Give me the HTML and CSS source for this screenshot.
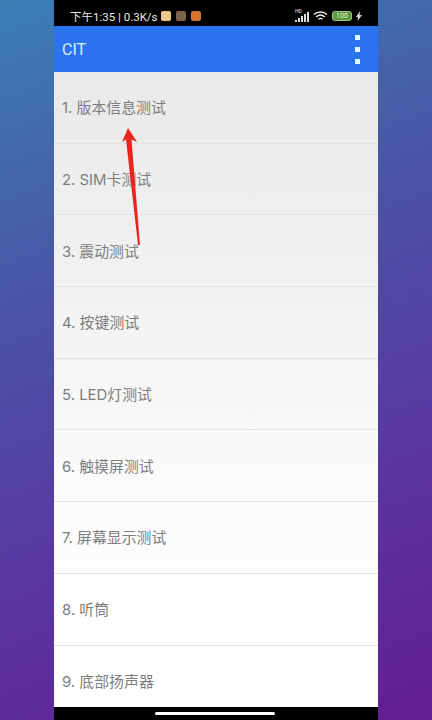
FILE: index.html
```html
<!DOCTYPE html>
<html lang="zh">
<head>
<meta charset="utf-8">
<title>CIT</title>
<link rel="stylesheet" href="styles.css">
</head>
<body>
<div class="phone">
  <div class="status">
    <div class="status-left">
      <span>下午1:35 | 0.3K/s</span>
      <i class="app a1"></i><i class="app a2"></i><i class="app a3"></i>
    </div>
    <div class="status-right">
      <span class="sig-wrap"><small class="hd">HD</small><svg width="15" height="10" viewBox="0 0 15 10"><path fill="#ddd" d="M0 8h2v2H0zM3 6h2v4H3zM6 4h2v6H6zM9 2h2v8H9zM12 0h2v10h-2z"/></svg></span>
      <svg class="wifi" width="15" height="12" viewBox="0 0 16 12" fill="none" stroke="#eee" stroke-width="1.500"><path d="M1 4.500c4-3.600 10-3.600 14 0M3.400 7c2.700-2.300 6.500-2.300 9.200 0M5.800 9.400c1.300-1 3.100-1 4.400 0"/></svg>
      <span class="batt">100</span>
      <svg width="6" height="10" viewBox="0 0 6 10"><path fill="#ddd" d="M4 0 0 6h2L1.500 10 6 4H3.500z"/></svg>
    </div>
  </div>
  <header class="bar">
    <span class="title">CIT</span>
    <div class="dots"><i></i><i></i><i></i></div>
  </header>
  <ul class="list">
    <li>1. 版本信息测试</li>
    <li>2. SIM卡测试</li>
    <li>3. 震动测试</li>
    <li>4. 按键测试</li>
    <li>5. LED灯测试</li>
    <li>6. 触摸屏测试</li>
    <li>7. 屏幕显示测试</li>
    <li>8. 听筒</li>
    <li>9. 底部扬声器</li>
  </ul>
  <div class="nav"><i></i></div>
  <svg class="arrow" width="30" height="125" viewBox="0 0 30 125"><path fill="#e8251f" d="M15 3 24 17 18.500 14.500 27 120 25 120 13 14.500 9 17z"/></svg>
</div>
</body>
</html>
```
FILE: styles.css
```css
* { box-sizing: border-box; }
html, body { margin: 0; height: 720px; overflow: hidden; }
body {
  background: linear-gradient(160deg, #3a7fb5 0%, #4a55a5 35%, #5a35a0 70%, #631c94 100%);
  font-family: "Liberation Sans", "Noto Sans CJK SC", sans-serif;
  display: flex;
  justify-content: center;
}
.phone {
  position: relative;
  width: 324px;
  height: 720px;
  display: flex;
  flex-direction: column;
  background: #000;
}
.status {
  height: 26px;
  flex: none;
  display: flex;
  justify-content: space-between;
  align-items: center;
  padding: 6px 16px 0 16px;
  color: #e8e8e8;
  font: 11.500px Roboto, "Noto Sans CJK SC", sans-serif;
}
.status-left, .status-right { display: flex; align-items: center; }
.status-right { gap: 4px; }
.app { width: 10px; height: 10px; border-radius: 2px; margin-left: 5px; }
.a1 { background: #ecc98a; margin-left: 3px; }
.a2 { background: #7d6448; }
.a3 { background: #d9722c; }
.sig-wrap { position: relative; display: flex; margin-top: 2px; margin-right: -1px; }
.hd { position: absolute; left: 0; top: -3px; font-size: 5px; line-height: 5px; }
.batt {
  width: 20px; height: 10px;
  border: 1px solid #9ac28a;
  border-radius: 3px;
  background: #5a9a3c;
  color: #e8f5df;
  font-size: 7px;
  line-height: 8px;
  text-align: center;
}
.bar {
  height: 46px;
  flex: none;
  background: #2a72ee;
  display: flex;
  align-items: center;
  justify-content: space-between;
  padding: 0 18px 0 8px;
  color: #d8efff;
}
.title { font: 16px Roboto, sans-serif; }
.dots { display: flex; flex-direction: column; gap: 7px; }
.dots i { width: 5px; height: 5px; background: #e4f6ff; display: block; }
.list {
  list-style: none;
  margin: 0;
  padding: 0;
  flex: none;
  height: 635px;
  background: linear-gradient(#e9e9ea 0%, #f1f1f1 30%, #fbfbfb 65%, #fff 100%);
  overflow: hidden;
}
.list li {
  height: 71.700px;
  padding: 0 8px 1px;
  display: flex;
  align-items: center;
  color: #7e7e7e;
  font: 14.900px Inter, "Noto Sans CJK SC", sans-serif;
  border-bottom: 1px solid #e2e2e2;
  margin: 0;
}
.list li:last-child { border-bottom: 0; height: 62px; padding-bottom: 0; padding-top: 8px; }
.nav { flex: 1; display: flex; justify-content: center; align-items: center; padding-right: 2px; }
.nav i { width: 120px; height: 3px; border-radius: 2px; background: #fff; display: block; }
.arrow { position: absolute; left: 59px; top: 125px; }
```
